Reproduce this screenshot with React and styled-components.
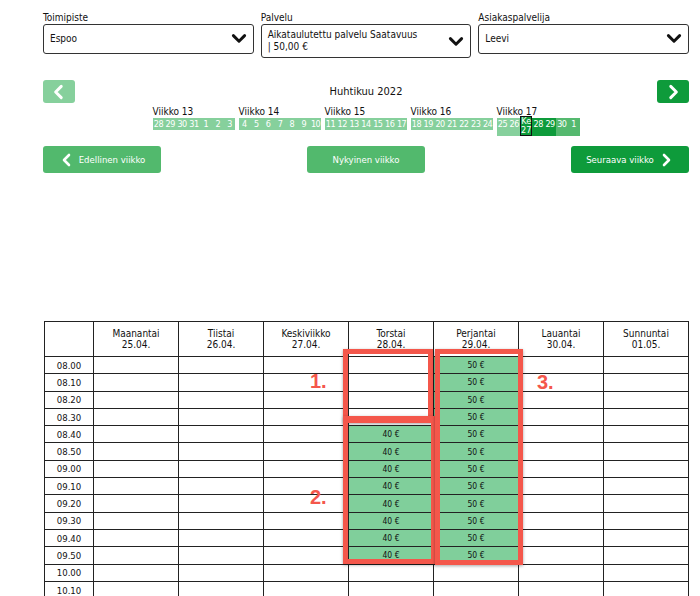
import React from "react";
import styled, { createGlobalStyle } from "styled-components";

const GlobalStyle = createGlobalStyle`
  body {
    margin: 0;
    background: #ffffff;
    font-family: "DejaVu Sans Condensed", "DejaVu Sans", "Liberation Sans", sans-serif;
    font-stretch: condensed;
    color: #111;
  }
`;

const GREEN_LIGHT = "#86d09c";
const GREEN = "#52b96d";
const GREEN_DARK = "#0e9b3b";
const CELL_GREEN = "#80cf9b";
const RED = "#f4574b";

const weeks = [
  { no: 13, days: [28, 29, 30, 31, 1, 2, 3] },
  { no: 14, days: [4, 5, 6, 7, 8, 9, 10] },
  { no: 15, days: [11, 12, 13, 14, 15, 16, 17] },
  { no: 16, days: [18, 19, 20, 21, 22, 23, 24] },
  { no: 17, days: [25, 26, 27, 28, 29, 30, 1] },
];

const dayHeads = [
  ["Maanantai", "25.04."],
  ["Tiistai", "26.04."],
  ["Keskiviikko", "27.04."],
  ["Torstai", "28.04."],
  ["Perjantai", "29.04."],
  ["Lauantai", "30.04."],
  ["Sunnuntai", "01.05."],
];

const times = [
  "08.00", "08.10", "08.20", "08.30", "08.40", "08.50", "09.00",
  "09.10", "09.20", "09.30", "09.40", "09.50", "10.00", "10.10",
];

function priceFor(dayIdx, rowIdx) {
  if (dayIdx === 3 && rowIdx >= 4 && rowIdx <= 11) return "40 €";
  if (dayIdx === 4 && rowIdx <= 11) return "50 €";
  return null;
}

function dayTone(weekNo, i) {
  if (weekNo !== 17) return "light";
  if (i === 2) return "today";
  if (i === 3 || i === 4) return "dark";
  if (i >= 5) return "mid";
  return "light";
}

const Chevron = ({ dir = "down", size = 16 }) => {
  const pts = {
    down: "3,5 8,10 13,5",
    left: "10,3 5,8 10,13",
    right: "6,3 11,8 6,13",
  }[dir];
  return (
    <svg width={size} height={size} viewBox="0 0 16 16" fill="none">
      <polyline points={pts} stroke="currentColor" strokeWidth="2.6" strokeLinecap="round" strokeLinejoin="round" />
    </svg>
  );
};

export default function App() {
  return (
    <Page>
      <GlobalStyle />
      <Filters>
        <Field>
          <Label>Toimipiste</Label>
          <Select>
            <SelectText>Espoo</SelectText>
            <Chevron size={18} />
          </Select>
        </Field>
        <Field>
          <Label>Palvelu</Label>
          <Select $tall>
            <SelectText>Aikataulutettu palvelu Saatavuus<br />| 50,00 €</SelectText>
            <Chevron size={18} />
          </Select>
        </Field>
        <Field>
          <Label>Asiakaspalvelija</Label>
          <Select>
            <SelectText>Leevi</SelectText>
            <Chevron size={18} />
          </Select>
        </Field>
      </Filters>

      <MonthNav>
        <ArrowButton $bg={GREEN_LIGHT}><Chevron dir="left" size={18} /></ArrowButton>
        <MonthCenter>
          <MonthTitle>Huhtikuu 2022</MonthTitle>
          <Weeks>
            {weeks.map((w) => (
              <Week key={w.no}>
                <WeekLabel>Viikko {w.no}</WeekLabel>
                <DayStrip>
                  {w.days.map((d, i) => {
                    const tone = dayTone(w.no, i);
                    return tone === "today" ? (
                      <Today key={i}>
                        <TodayLine>Ke</TodayLine>
                        <TodayLine>{d}</TodayLine>
                      </Today>
                    ) : (
                      <Day key={i} $tone={tone}>{d}</Day>
                    );
                  })}
                </DayStrip>
              </Week>
            ))}
          </Weeks>
        </MonthCenter>
        <ArrowButton $bg={GREEN_DARK}><Chevron dir="right" size={18} /></ArrowButton>
      </MonthNav>

      <WeekActions>
        <ActionButton $bg={GREEN}><Chevron dir="left" size={16} />Edellinen viikko</ActionButton>
        <ActionButton $bg={GREEN}>Nykyinen viikko</ActionButton>
        <ActionButton $bg={GREEN_DARK}>Seuraava viikko<Chevron dir="right" size={16} /></ActionButton>
      </WeekActions>

      <CalendarWrap>
        <Calendar>
          <colgroup>
            <col style={{ width: 49 }} />
            {dayHeads.map((_, i) => <col key={i} />)}
          </colgroup>
          <thead>
            <tr>
              <HeadCell />
              {dayHeads.map(([name, date]) => (
                <HeadCell key={name}>{name}<br />{date}</HeadCell>
              ))}
            </tr>
          </thead>
          <tbody>
            {times.map((t, r) => (
              <tr key={t}>
                <TimeCell>{t}</TimeCell>
                {dayHeads.map((_, d) => {
                  const p = priceFor(d, r);
                  return <SlotCell key={d} $free={!!p}>{p}</SlotCell>;
                })}
              </tr>
            ))}
          </tbody>
        </Calendar>

        <Marker $left={299} $top={28} $w={90} $h={74} />
        <Marker $left={299} $top={95} $w={93} $h={148} />
        <Marker $left={391} $top={28} $w={88} $h={216} />
        <MarkNo $left={266} $top={49}>1.</MarkNo>
        <MarkNo $left={266} $top={165}>2.</MarkNo>
        <MarkNo $left={493} $top={50}>3.</MarkNo>
      </CalendarWrap>
    </Page>
  );
}

const Page = styled.div`
  width: 646px;
  padding: 11px 11px 0 43px;
`;

const Filters = styled.div`
  display: grid;
  grid-template-columns: repeat(3, 1fr);
  gap: 7px;
  align-items: start;
`;

const Field = styled.div`
  display: flex;
  flex-direction: column;
`;

const Label = styled.div`
  font-size: 10px;
  line-height: 13px;
  color: #111;
`;

const Select = styled.div`
  display: flex;
  align-items: center;
  justify-content: space-between;
  box-sizing: border-box;
  height: ${(p) => (p.$tall ? "34px" : "30px")};
  padding: 0 5px 0 6px;
  border: 1px solid #333;
  border-radius: 3px;
  color: #111;
  svg { flex: none; margin-top: ${(p) => (p.$tall ? "2px" : "0")}; }
`;

const SelectText = styled.div`
  font-size: 10px;
  line-height: 12px;
`;

const MonthNav = styled.div`
  display: grid;
  grid-template-columns: 32px 1fr 32px;
  margin-top: 22px;
`;

const ArrowButton = styled.div`
  display: flex;
  align-items: center;
  justify-content: center;
  width: 32px;
  height: 23px;
  border-radius: 3px;
  background: ${(p) => p.$bg};
  color: #fff;
`;

const MonthCenter = styled.div`
  display: flex;
  flex-direction: column;
  align-items: center;
`;

const MonthTitle = styled.div`
  font-size: 11px;
  line-height: 13px;
  margin-top: 5px;
`;

const Weeks = styled.div`
  display: flex;
  gap: 3px;
  margin-top: 8px;
`;

const Week = styled.div`
  display: flex;
  flex-direction: column;
  width: 83px;
`;

const WeekLabel = styled.div`
  font-size: 10px;
  line-height: 11px;
  white-space: nowrap;
`;

const DayStrip = styled.div`
  display: grid;
  grid-template-columns: repeat(7, 1fr);
  height: 12px;
  margin-top: 1px;
`;

const toneBg = { light: GREEN_LIGHT, dark: GREEN_DARK, mid: "#55b96f" };

const Day = styled.div`
  background: ${(p) => toneBg[p.$tone]};
  color: #fff;
  font-size: 9px;
  line-height: 12px;
  text-align: center;
  letter-spacing: -0.5px;
  white-space: nowrap;
`;

const Today = styled.div`
  position: relative;
  z-index: 1;
  margin-top: -2px;
  height: 20px;
  box-sizing: border-box;
  border: 1px solid #111;
  background: ${GREEN_DARK};
  color: #fff;
  display: flex;
  flex-direction: column;
  align-items: center;
`;

const TodayLine = styled.span`
  font-size: 9px;
  line-height: 9px;
  height: 9px;
`;

const WeekActions = styled.div`
  display: flex;
  justify-content: space-between;
  margin-top: 16px;
`;

const ActionButton = styled.div`
  display: flex;
  align-items: center;
  justify-content: center;
  gap: 4px;
  width: 118px;
  height: 27px;
  border-radius: 3px;
  background: ${(p) => p.$bg};
  color: #fff;
  font-size: 9.5px;
`;

const CalendarWrap = styled.div`
  position: relative;
  margin-top: 148px;
  margin-left: 1px;
`;

const Calendar = styled.table`
  width: 645px;
  table-layout: fixed;
  border-collapse: collapse;
  border: 1.5px solid #333;
`;

const HeadCell = styled.th`
  height: 34px;
  padding: 0;
  border: 1px solid #222;
  font-weight: normal;
  font-size: 10px;
  line-height: 11px;
  color: #111;
  text-align: center;
  vertical-align: middle;
`;

const TimeCell = styled.td`
  height: 16.3px;
  padding: 0;
  border: 1px solid #222;
  font-size: 9.5px;
  text-align: center;
  color: #111;
`;

const SlotCell = styled.td`
  height: 16.3px;
  padding: 0;
  border: 1px solid #222;
  background: ${(p) => (p.$free ? CELL_GREEN : "#fff")};
  font-size: 8.5px;
  text-align: center;
  color: #111;
`;

const Marker = styled.div`
  position: absolute;
  left: ${(p) => p.$left}px;
  top: ${(p) => p.$top}px;
  width: ${(p) => p.$w}px;
  height: ${(p) => p.$h}px;
  box-sizing: border-box;
  border: 5px solid ${RED};
  box-shadow: 0 1px 3px rgba(0, 0, 0, 0.35);
`;

const MarkNo = styled.div`
  position: absolute;
  left: ${(p) => p.$left}px;
  top: ${(p) => p.$top}px;
  font-family: "Liberation Sans", sans-serif;
  font-stretch: normal;
  font-weight: bold;
  font-size: 20px;
  color: ${RED};
`;
